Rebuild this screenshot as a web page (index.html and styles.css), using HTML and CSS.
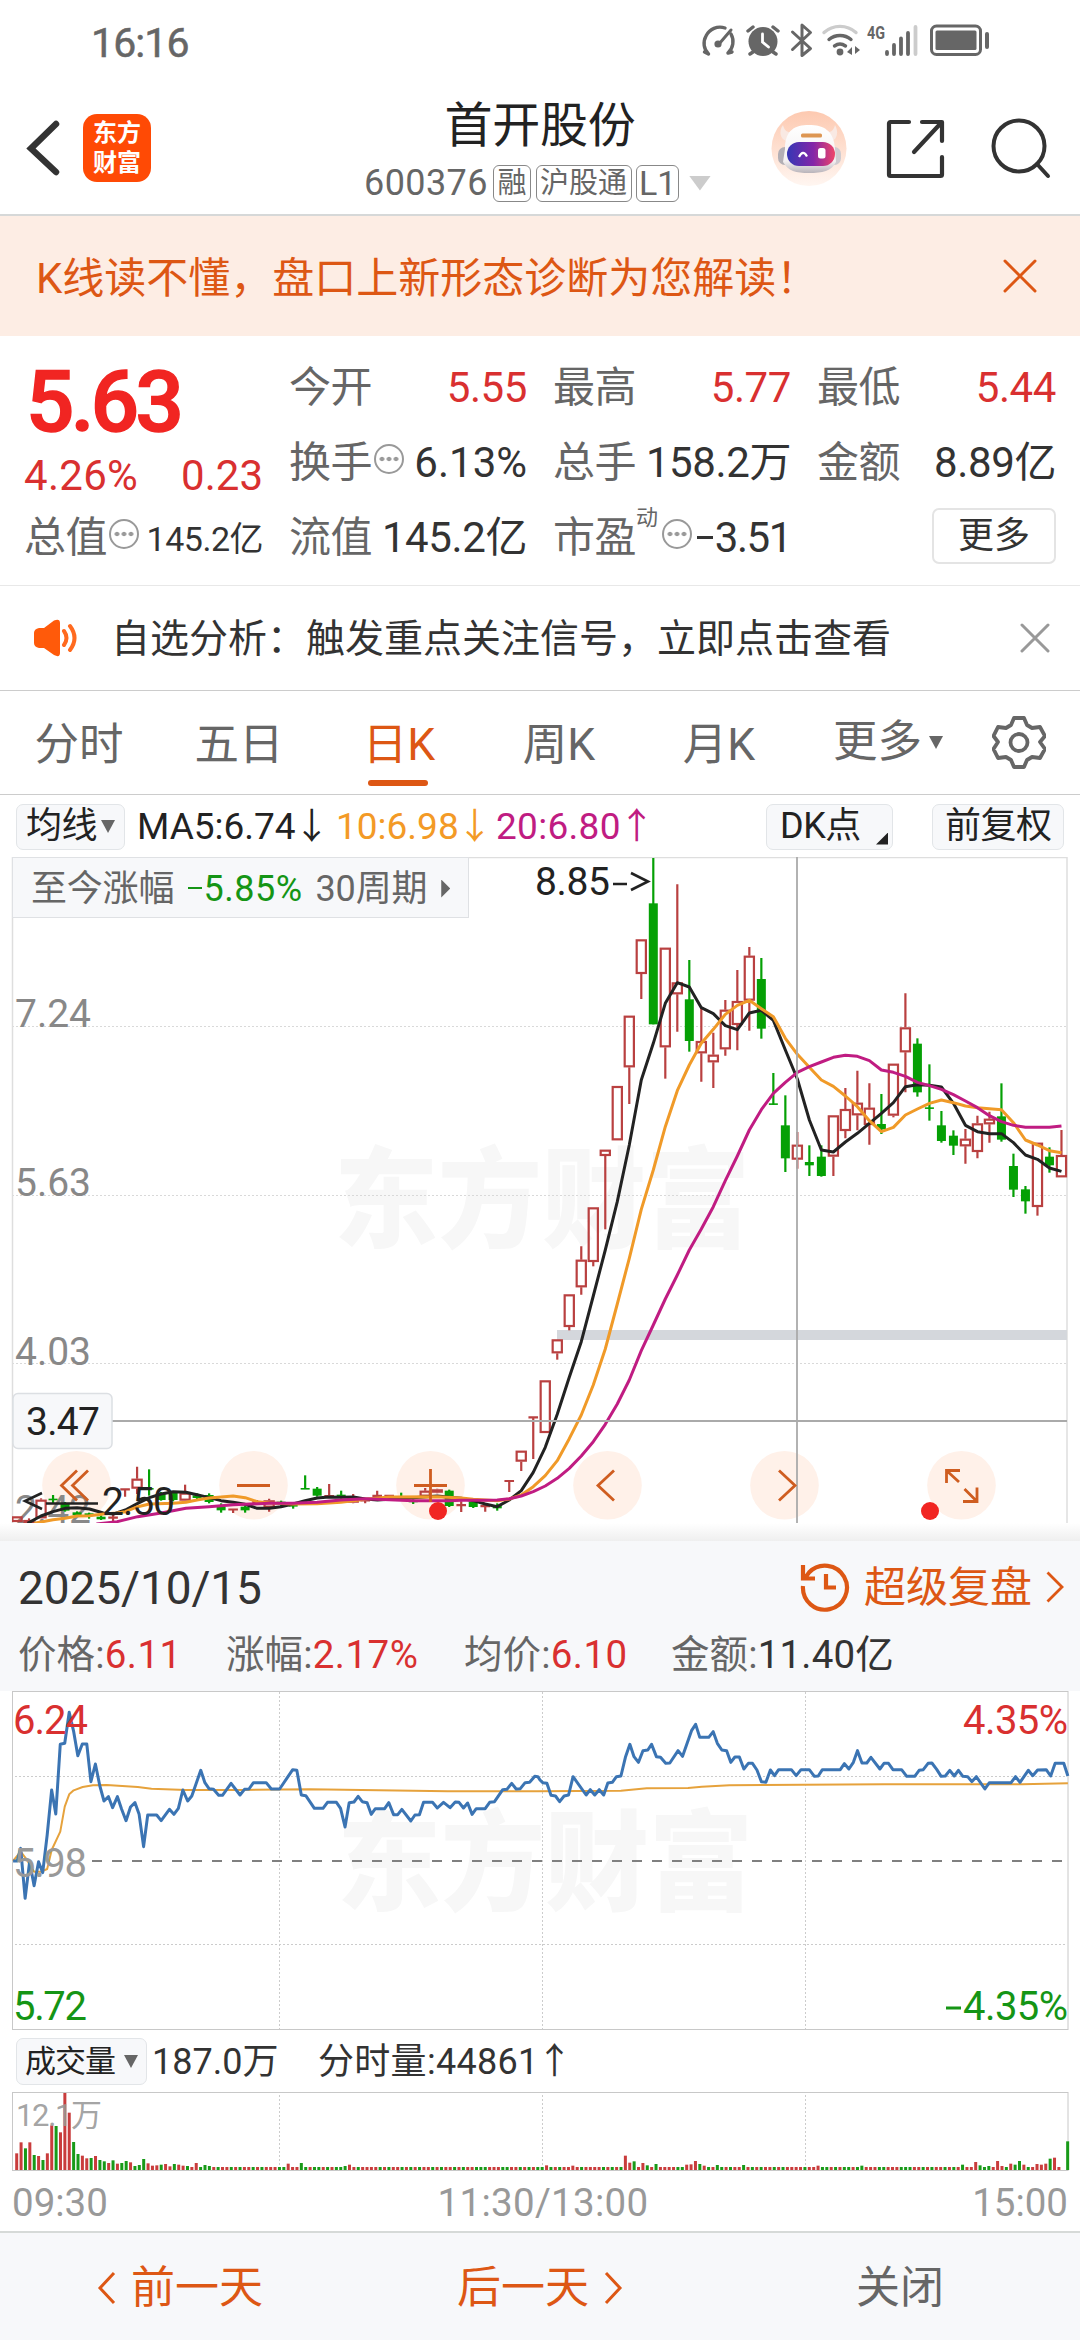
FILE: index.html
```html
<!DOCTYPE html>
<html lang="zh-CN">
<head>
<meta charset="utf-8">
<title>首开股份 600376</title>
<link rel="stylesheet" href="styles.css">
</head>
<body>
<div class="status">
  <span class="clock">16:16</span>
  <svg class="status-icons" viewBox="700 20 292 42" width="292" height="42" fill="none" stroke="#666" stroke-width="3.4" stroke-linecap="round">
    <path d="M708.500 54A15 15 0 0 1 706 36A15.500 15.500 0 0 1 725 28M731 34A15.500 15.500 0 0 1 728 53M708.500 54l-4 -2M728 53l4-1"/><path d="M731 30L719 44" stroke-width="3"/><circle cx="718" cy="44" r="3.600" fill="#666" stroke="none"/>
    <circle cx="763" cy="41.500" r="14.500" fill="#666" stroke="none"/><path d="M748 31l5-4M773 27l5 4M753 52l-3 2M773 52l3 2"/><path d="M762.500 34v8l6 5" stroke="#fff" stroke-width="2.800"/>
    <path d="M792.500 32l18 16.500-8.500 7V25l8.500 7.500-18 17" stroke-width="3" stroke-linejoin="round"/>
    <path d="M824 32.500a24 24 0 0 1 32 0" stroke="#ccc"/><path d="M829 39.500a17 17 0 0 1 22 0M834.500 46a9.500 9.500 0 0 1 11 0"/><circle cx="840" cy="52" r="3.400" fill="#666" stroke="none"/><path d="M847 52l5-5v8M855 46v8l5-4z" stroke="none" fill="#666"/>
    <text x="867" y="38.500" class="net" textLength="18" lengthAdjust="spacingAndGlyphs">4G</text>
    <path d="M887 52v2M894 45v9M901 38.500v15.500M908 33v21" stroke-width="3.800"/><path d="M915.500 27v27" stroke="#ccc" stroke-width="3.800"/>
    <rect x="931.500" y="26" width="49" height="28.500" rx="5" stroke-width="3"/><rect x="935.500" y="30.500" width="41" height="19.500" rx="1.500" fill="#666" stroke="none"/><path d="M987 34v13" stroke-width="4"/>
  </svg>
</div>

<header class="header">
  <div class="nav-left">
    <svg width="34" height="58" viewBox="0 0 34 58" fill="none" stroke="#333" stroke-width="6.500" stroke-linecap="round"><path d="M30 5L5 29.500L30 53"/></svg>
    <div class="logo"><span>东方</span><span>财富</span></div>
  </div>
  <div class="title-box">
    <h1>首开股份</h1>
    <div class="code-row"><span class="code">600376</span><span class="tag">融</span><span class="tag">沪股通</span><span class="tag">L1</span><i class="tri-down light"></i></div>
  </div>
  <div class="nav-right">
    <svg class="robot" width="76" height="76" viewBox="0 0 76 76">
      <defs>
        <linearGradient id="peach" x2="0" y2="1"><stop stop-color="#fdc9b0"/><stop offset="1" stop-color="#fff6f1"/></linearGradient>
        <linearGradient id="visor"><stop stop-color="#3537b5"/><stop offset=".55" stop-color="#8426a8"/><stop offset="1" stop-color="#ef4569"/></linearGradient>
        <linearGradient id="shell" x2="0" y2="1"><stop stop-color="#fff"/><stop offset=".75" stop-color="#f4f1f2"/><stop offset="1" stop-color="#b9b4ba"/></linearGradient>
      </defs>
      <circle cx="38" cy="37.500" r="37.500" fill="url(#peach)"/>
      <rect x="7" y="36" width="14" height="18" rx="7" fill="#b3afb5"/><rect x="57" y="36" width="13" height="18" rx="6.500" fill="#cfcbd0"/>
      <path d="M12 14c-5 7-2 14 3 16l8-8c-7 0-10-3-11-8zM64 14c4 7 2 14-3 16l-8-8c7 0 10-3 11-8z" fill="#f9e9e3"/>
      <path d="M14 38C14 19 24 14 38 14s25 5 26 24l1 13c-4 9-14 11-27 11s-21-2-26-11z" fill="url(#shell)"/>
      <rect x="16" y="31" width="48" height="24" rx="12" fill="url(#visor)"/><rect x="30" y="22.500" width="21" height="4" rx="1.500" fill="#dd9653"/>
      <path d="M28 46q4-8 8-.5" fill="none" stroke="#fff" stroke-width="2.200"/><rect x="47" y="37" width="7.500" height="10.500" rx="2.500" fill="#fff"/>
    </svg>
    <svg width="60" height="60" viewBox="0 0 60 60" fill="none" stroke="#333" stroke-width="4.200" stroke-linecap="round" stroke-linejoin="round"><path d="M23 3H4.500Q3 3 3 4.500V55.500Q3 57 4.500 57H54.500Q56 57 56 55.500V38M36 3H56V22M55 4L28 33"/></svg>
    <svg width="62" height="62" viewBox="0 0 62 62" fill="none" stroke="#333" stroke-width="4" stroke-linecap="round"><circle cx="29" cy="28" r="25.500"/><path d="M47 46L58 58"/></svg>
  </div>
</header>

<div class="banner"><span>K线读不懂，盘口上新形态诊断为您解读！</span>
  <svg width="34" height="34" viewBox="0 0 34 34" stroke="#dd5714" stroke-width="3" stroke-linecap="round"><path d="M2 2L32 32M32 2L2 32"/></svg></div>

<section class="quote">
  <div class="price-col">
    <div class="price">5.63</div>
    <div class="chg"><span>4.26%</span><span>0.23</span></div>
    <div class="cell"><span class="lab">总值<i class="more-dot"></i></span><span class="val small">145.2亿</span></div>
  </div>
  <div class="grid">
    <div class="cell"><span class="lab">今开</span><span class="val red">5.55</span></div>
    <div class="cell"><span class="lab">最高</span><span class="val red">5.77</span></div>
    <div class="cell"><span class="lab">最低</span><span class="val red">5.44</span></div>
    <div class="cell"><span class="lab">换手<i class="more-dot"></i></span><span class="val wide">6.13%</span></div>
    <div class="cell"><span class="lab">总手</span><span class="val">158.2万</span></div>
    <div class="cell"><span class="lab">金额</span><span class="val">8.89亿</span></div>
    <div class="cell"><span class="lab">流值</span><span class="val">145.2亿</span></div>
    <div class="cell"><span class="lab">市盈<sup>动</sup><i class="more-dot"></i></span><span class="val pe"><b class="minus"></b>3.51</span></div>
    <div class="cell end"><button class="more-btn">更多</button></div>
  </div>
</section>

<div class="notice">
  <svg width="46" height="38" viewBox="0 0 46 38"><path d="M6 9H11L21 1.500Q27-1 27 4V34Q27 39 21 36L11 29H6Q1 28 1 24V14Q1 10 6 9Z" fill="#ff5a0a"/><path d="M31 12q5 7 0 14M37 7q9 12 0 24" fill="none" stroke="#ff6a1f" stroke-width="4" stroke-linecap="round"/></svg>
  <span>自选分析：触发重点关注信号，立即点击查看</span>
  <svg width="30" height="30" viewBox="0 0 30 30" stroke="#999" stroke-width="3" stroke-linecap="round"><path d="M2 2L28 28M28 2L2 28"/></svg>
</div>

<nav class="tabs">
  <span>分时</span><span>五日</span><span class="on">日K</span><span>周K</span><span>月K</span><span class="tab-more">更多<i class="tri-down"></i></span>
  <svg class="gear" width="54" height="54" viewBox="0 0 54 54" fill="none" stroke="#666" stroke-width="3.800" stroke-linejoin="round"><path d="M22 3H32L35 10L40 13L48 12L53 21L48 27L53 34L48 43L40 42L35 45L32 52H22L19 45L14 42L6 43L1.500 34L6 27L1.500 21L6 12L14 13L19 10Z"/><circle cx="27" cy="27.500" r="8.500"/></svg>
</nav>

<div class="ma-row">
  <span class="chip">均线<i class="tri-down"></i></span>
  <span class="ma ma5">MA5:6.74<b>↓</b></span><span class="ma ma10">10:6.98<b>↓</b></span><span class="ma ma20">20:6.80<b>↑</b></span>
  <span class="chip dk">DK点<i class="corner"></i></span><span class="chip fq">前复权</span>
</div>

<section class="kchart">
  <svg viewBox="0 857 1080 684" width="1080" height="684">
    <defs>
      <linearGradient id="shade" x2="0" y2="1"><stop stop-color="#fff"/><stop offset="1" stop-color="#efefef"/></linearGradient>
      <clipPath id="kclip"><rect x="12" y="857" width="1058" height="666"/></clipPath>
    </defs>
    <text class="wm" x="334" y="1239" textLength="416" lengthAdjust="spacingAndGlyphs">东方财富</text>
    <g class="gridline"><path d="M12 1026.500H1067M12 1195.500H1067M12 1363.500H1067"/></g>
    <path class="frame" d="M12.500 1523V857.500H1067V1523"/>
    <rect x="557" y="1330" width="510" height="10" fill="#d4d7dc"/>
    <g class="circles" id="circles"></g>
    <g class="axis"><text x="15" y="1027" textLength="76">7.24</text><text x="15" y="1196" textLength="76">5.63</text><text x="15" y="1365" textLength="76">4.03</text><text x="15" y="1523" textLength="76">2.42</text></g>
    <g id="candles" clip-path="url(#kclip)"></g>
    <g clip-path="url(#kclip)" class="lines"><polyline id="ma5"/><polyline id="ma10"/><polyline id="ma20"/></g>
    <g class="cross"><path d="M797 857V1523M112 1421H1067"/></g>
    <g class="icons">
      <path d="M77 1470.500L61.500 1485.500L77 1500.500M88 1470.500L72.500 1485.500L88 1500.500M237 1485.500H270M414 1485.500H447M430.500 1469V1502M614 1470.500L598 1485.500L614 1500.500M779 1470.500L795 1485.500L779 1500.500"/>
      <path d="M946.500 1483V1470.500H960M947 1471L959 1482M963 1501.500H977V1487.500M976.500 1501L964.500 1489" stroke-width="3.600"/>
    </g>
    <circle cx="438" cy="1511" r="9" fill="#f12522"/><circle cx="930" cy="1511" r="9" fill="#f12522"/>
    <g class="mark"><text x="535" y="895" textLength="75">8.85</text><path d="M613 884H627M631 873L648 881.500L631 890"/><text x="102" y="1515" textLength="73">2.50</text><path d="M42 1493L25 1501L42 1509M46 1503.500H98"/></g>
    <rect x="13" y="1393.500" width="99" height="55" rx="5" fill="#f7f8fa" stroke="#dcdfe3" stroke-width="1.500"/>
    <text class="cur" x="26" y="1435" textLength="74">3.47</text>
    <rect x="0" y="1523" width="1080" height="18" fill="url(#shade)"/>
  </svg>
  <div class="range"><span>至今涨幅</span><span class="green"><b class="minus"></b>5.85%</span><span>30周期</span><i class="tri-right"></i></div>
</section>

<section class="panel">
  <div class="panel-top"><span class="date">2025/10/15</span>
    <span class="replay">
      <svg width="50" height="50" viewBox="0 0 50 50" fill="none" stroke="#dd5714" stroke-width="4.200"><path d="M3 24A22 22 0 1 0 9 10.500L5 16M3 3V16.500H15M26 12V25.500H36"/></svg>
      <span>超级复盘</span>
      <svg width="18" height="32" viewBox="0 0 18 32" fill="none" stroke="#dd5714" stroke-width="2.800"><path d="M1.500 1.500L16 16L1.500 30.500"/></svg>
    </span>
  </div>
  <div class="panel-stats"><span>价格:<b>6.11</b></span><span>涨幅:<b>2.17%</b></span><span>均价:<b>6.10</b></span><span>金额:<em>11.40亿</em></span></div>
</section>

<svg class="minute" viewBox="0 1691 1080 340" width="1080" height="340">
  <text class="wm" x="337" y="1902" textLength="416" lengthAdjust="spacingAndGlyphs">东方财富</text>
  <g class="gridline strong"><path d="M15 1776.500H1067M15 1944.500H1067M279.500 1692V2029M542.500 1692V2029M805.500 1692V2029"/></g>
  <path d="M92 1861H1067" stroke="#808080" stroke-width="2" stroke-dasharray="10 10"/>
  <rect x="12.500" y="1691.500" width="1055.500" height="338" class="frame2"/>
  <polyline id="avg"/><polyline id="px"/>
  <g class="mtext"><text x="13" y="1734" textLength="75" fill="#d93030">6.24</text><text x="13" y="1877" textLength="74" fill="#999">5.98</text><text x="13" y="2020" textLength="74" fill="#159515">5.72</text><text x="963" y="1734" textLength="105" fill="#d93030">4.35%</text><text x="963" y="2020" textLength="105" fill="#159515">4.35%</text><path d="M946 2008H961" stroke="#159515" stroke-width="3"/></g>
</svg>

<div class="vol-row"><span class="chip vol">成交量<i class="tri-down"></i></span><span class="v1">187.0万</span><span class="v2">分时量:44861<b>↑</b></span></div>
<svg class="volume" viewBox="0 2092 1080 80" width="1080" height="80">
  <g class="gridline strong"><path d="M279.500 2095V2170M542.500 2095V2170M805.500 2095V2170"/></g>
  <rect x="12.500" y="2092.500" width="1055.500" height="78" class="frame2"/>
  <g id="vol"></g>
  <text x="16" y="2125.500" textLength="86" class="vmax">12.1万</text>
</svg>
<div class="time-axis"><span>09:30</span><span>11:30/13:00</span><span>15:00</span></div>
<footer class="footer">
  <span class="act"><svg width="20" height="34" viewBox="0 0 20 34" fill="none" stroke="#dd5714" stroke-width="3"><path d="M17 2L3 17L17 32"/></svg>前一天</span>
  <span class="act">后一天<svg width="20" height="34" viewBox="0 0 20 34" fill="none" stroke="#dd5714" stroke-width="3"><path d="M3 2L17 17L3 32"/></svg></span>
  <span>关闭</span>
</footer>
<script src="script.js"></script>
</body>
</html>
```
FILE: styles.css
```css
* { box-sizing: border-box; }
body { margin: 0; width: 1080px; background: #fff; color: #333; font-family: Roboto, "Noto Sans CJK SC", sans-serif; }
i, em { font-style: normal; }
b { font-weight: 400; }
svg { display: block; flex: none; }

.status { height: 84px; display: flex; justify-content: space-between; align-items: center; padding: 0 88px 2px 91px; }
.clock { font-size: 41px; font-weight: 400; color: #666; line-height: 42px; padding-top: 4px; letter-spacing: -.9px; -webkit-text-stroke: .5px #666; }
.net { font-size: 19px; font-weight: 700; fill: #666; stroke: none; }

.header { height: 132px; border-bottom: 2px solid #d6d8d8; display: grid; grid-template-columns: 340px 1fr 340px; }
.nav-left { display: flex; align-items: center; padding: 0 0 2px 26px; gap: 23px; }
.logo { width: 68px; height: 68px; border-radius: 14px; background: #ff4a05; color: #fff; font-size: 24px; font-weight: 700; line-height: 30px; padding-top: 4px; display: flex; flex-direction: column; align-items: center; }
.title-box { display: flex; flex-direction: column; align-items: center; }
h1 { margin: 13px 0 0; font-size: 48px; line-height: 58px; font-weight: 400; color: #222; letter-spacing: -.3px; }
.code-row { display: flex; align-items: center; height: 36px; margin: 10px 0 0 0; color: #666; width: 352px; }
.code { font-size: 36px; line-height: 36px; width: 129px; letter-spacing: .4px; white-space: nowrap; flex: none; }
.tag { height: 37px; border: 1.5px solid #888; border-radius: 6px; font-size: 29px; line-height: 34px; padding: 0 3.500px; margin-right: 4.500px; white-space: nowrap; }
.tag:last-of-type { font-size: 34px; padding: 0 2px; }
.tri-down { display: inline-block; width: 14px; height: 13px; background: #666; clip-path: polygon(0 0, 100% 0, 50% 100%); }
.tri-down.light { width: 22px; height: 15px; background: #ccc; margin-left: 5px; flex: none; }
.nav-right { display: flex; align-items: center; padding-left: 31px; }
.nav-right svg:nth-child(2) { margin-left: 39px; }
.nav-right svg:nth-child(3) { margin-left: 44px; }

.banner { height: 120px; background: #fdede4; color: #dd5714; display: flex; align-items: center; justify-content: space-between; padding: 0 43px 0 36px; font-size: 42px; line-height: 60px; }
.banner span { padding-top: 6px; letter-spacing: 0; }

.quote { height: 250px; border-bottom: 1px solid #e8e8e8; display: grid; grid-template-columns: 239px 767px; gap: 26px; padding: 14px 24px 0; }
.price-col { display: flex; flex-direction: column; }
.price { height: 102px; line-height: 104px; font-size: 85px; font-weight: 500; color: #f12522; letter-spacing: -3.6px; padding-left: 2px; -webkit-text-stroke: 1.5px #f12522; }
.chg { height: 48px; line-height: 48px; color: #d93030; font-size: 42px; display: flex; justify-content: space-between; }
.chg span:first-child { letter-spacing: .3px; }
.grid { display: grid; grid-template-columns: 238px 238px 239px; grid-auto-rows: 75px; column-gap: 26px; }
.cell { display: flex; align-items: center; justify-content: space-between; height: 75px; font-size: 42px; line-height: 60px; white-space: nowrap; padding-top: 1px; }
.lab { display: flex; align-items: center; color: #666; letter-spacing: -.5px; }
.val { letter-spacing: -.4px; }
.val.wide { letter-spacing: 0; }
.val.pe { letter-spacing: -1.4px; }
.val.small { font-size: 34px; padding-top: 1px; letter-spacing: -.5px; }
.red { color: #d93030; }
.more-dot { width: 30px; height: 30px; margin: -8px 0 0 2px; border: 2.5px solid #999; border-radius: 50%; background: radial-gradient(circle, #999 2px, transparent 2.6px) center / 7px 30px repeat-x; background-clip: content-box; padding: 0 2px; }
sup { font-size: 22px; line-height: 22px; align-self: flex-start; margin-top: -1px; width: 24px; }
.minus { display: inline-block; width: .37em; height: .075em; background: currentColor; vertical-align: .31em; margin: 0 2px 0 1px; }
.cell.end { justify-content: flex-end; }
.more-btn { width: 124px; height: 56px; background: #fff; border: 2px solid #e4e4e4; border-radius: 7px; font: 36px/50px Roboto, "Noto Sans CJK SC", sans-serif; color: #333; padding: 0; margin-top: -5px; }

.notice { height: 105px; border-bottom: 1px solid #ccc; display: flex; align-items: center; padding: 0 30px 0 33px; font-size: 39px; line-height: 60px; }
.notice span { flex: 1; padding: 1px 0 0 32px; letter-spacing: 0; }

.tabs { height: 104px; border-bottom: 1px solid #ccc; display: grid; grid-template-columns: repeat(5, 160px) 180px 1fr; align-items: stretch; font-size: 44.5px; color: #666; text-align: center; line-height: 109px; }
.tabs span { position: relative; height: 103px; left: -1px; }
.on { color: #dd5714; }
.on::after { content: ""; position: absolute; left: 49px; bottom: 8px; width: 60px; height: 6px; border-radius: 3px; background: #dd5714; }
.tab-more { display: flex; align-items: center; padding-left: 34px; gap: 7px; white-space: nowrap; }
.gear { margin: 24px 0 0 12px; }

.ma-row { height: 62px; display: flex; align-items: center; padding: 1px 16px 0; color: #222; }
.chip { height: 46px; display: flex; align-items: center; background: #f7f8fa; border: 1.5px solid #e2e5e8; border-radius: 7px; font-size: 36px; line-height: 43px; white-space: nowrap; flex: none; padding-left: 9px; letter-spacing: -.5px; color: #222; }
.ma-row > .chip:first-child { width: 109px; gap: 4px; }
.ma { font-size: 37px; line-height: 46px; white-space: nowrap; display: flex; }
.ma b, .v2 b { width: 38px; font-size: 36px; margin: 0 -4px 0 -2px; }
.ma5 { margin-left: 12px; width: 199px; } .ma10 { width: 160px; color: #f39a26; } .ma20 { color: #c01c82; letter-spacing: .3px; }
.chip.dk { width: 127px; margin-left: auto; position: relative; padding-left: 13px; }
.corner { position: absolute; right: 4px; bottom: 4px; width: 12px; height: 12px; background: #222; clip-path: polygon(100% 0, 100% 100%, 0 100%); }
.chip.fq { width: 132px; margin-left: 39px; padding-left: 12px; }

.kchart { position: relative; height: 684px; }
.range { position: absolute; left: 12px; top: 0; width: 457px; height: 61px; background: #f7f8fa; border: 1.5px solid #dfe1e4; display: flex; align-items: center; padding: 2px 0 0 18px; font-size: 36px; line-height: 50px; color: #666; white-space: nowrap; letter-spacing: -.2px; }
.green { color: #159515; margin: 0 13px 0 13px; letter-spacing: .5px; }
.tri-right { width: 9px; height: 18px; background: #666; margin-left: 14px; clip-path: polygon(0 0, 100% 50%, 0 100%); }
.wm { font-size: 109px; font-weight: 900; fill: #f7f7f7; }
.gridline path { fill: none; stroke: #d9d9d9; stroke-width: 1; stroke-dasharray: 2 2; }
.gridline.strong path { stroke: #ccc; }
.frame { fill: none; stroke: #dedede; stroke-width: 1.5; }
.frame2 { fill: none; stroke: #c8c8c8; stroke-width: 1; }
.circles circle { fill: #fff1e9; }
.axis text { font-size: 39px; fill: #888; }
.mark text, .cur { font-size: 39px; fill: #222; }
.mark path { fill: none; stroke: #222; stroke-width: 2.6; }
.cross path { fill: none; stroke: #aaa; stroke-width: 1.8; }
.icons path { fill: none; stroke: #cf5d20; stroke-width: 2.8; }
polyline { fill: none; stroke-width: 3; stroke-linejoin: round; }
#ma5 { stroke: #222; } #ma10 { stroke: #f09a28; } #ma20 { stroke: #c01c82; }
#px { stroke: #3b74b3; } #avg { stroke: #e6a23c; stroke-width: 2; }
.up { fill: none; stroke: #b94040; stroke-width: 2.2; }
.upw { stroke: #b94040; stroke-width: 2.2; }
.dn { fill: #05a005; }
.dnw { stroke: #05a005; stroke-width: 2.2; }

.panel { height: 150px; background: #f7f8fa; padding: 12px 16px 0 18px; }
.panel-top { height: 68px; display: flex; align-items: center; justify-content: space-between; }
.date { font-size: 46px; line-height: 60px; letter-spacing: -.1px; padding-top: 1px; }
.replay { display: flex; align-items: center; color: #dd5714; font-size: 42px; line-height: 60px; letter-spacing: 0; }
.replay span { margin: 0 14px 0 14px; padding-top: 2px; }
.panel-stats { display: grid; grid-template-columns: 208px 238px 207px 1fr; font-size: 38.5px; line-height: 67px; color: #666; white-space: nowrap; letter-spacing: .1px; }
.panel-stats b { color: #d93030; letter-spacing: .5px; } .panel-stats em { color: #333; letter-spacing: .2px; }
.mtext text { font-size: 40px; }

.vol-row { height: 61px; display: flex; align-items: center; padding-left: 16px; font-size: 36px; line-height: 50px; color: #333; }
.chip.vol { width: 131px; height: 47px; font-size: 31px; padding-left: 8px; letter-spacing: -1px; gap: 9px; }
.v1 { margin-left: 5px; width: 166px; }
.v2 { display: flex; letter-spacing: .3px; }
.vmax { font-size: 31px; fill: #999; fill-opacity: .9; }
.time-axis { height: 59px; display: grid; grid-template-columns: 1fr 1fr 1fr; padding: 0 12px; font-size: 38.5px; line-height: 62px; color: #999; }
.time-axis span:nth-child(2) { text-align: center; padding-left: 6px; letter-spacing: .3px; }
.time-axis span:nth-child(3) { text-align: right; }
.footer { height: 109px; border-top: 2px solid #d6dad8; background: #f7f8fa; display: grid; grid-template-columns: 1fr 1fr 1fr; font-size: 44px; line-height: 110px; color: #666; text-align: center; }
.act { display: flex; align-items: center; justify-content: center; gap: 14px; color: #dd5714; }
```
FILE: script.js
```js
const NS = 'http://www.w3.org/2000/svg';
const add = (parent, tag, attrs) => {
  const el = document.createElementNS(NS, tag);
  for (const k in attrs) el.setAttribute(k, attrs[k]);
  parent.appendChild(el);
};

// Candles: direction, body top, body bottom, high, low (chart units, thirds of a pixel from y = 850)
const candles = `r 1999 2016 1999 2016|r 2010 2020 2005 2020|r 1949 2005 1945 2005|g 1946 1950 1935 1960|g 1960 1982 1956 1985|g 1987 1995 1984 1999|g 1990 1996 1988 2006|g 2000 2008 1996 2010|r 2000 2006 1992 2013|r 1917 1919 1917 1940|r 1886 1916 1850 1932|g 1914 1917 1858 1937|g 1932 1950 1926 1952|g 1928 1950 1924 1954|r 1928 1952 1904 1952|g 1936 1944 1930 1948|g 1935 1956 1930 1960|g 1970 1981 1960 1988|r 1977 1980 1977 1989|g 1970 1981 1966 1988|r 1954 1958 1950 1964|r 1951 1973 1946 1985|g 1955 1960 1952 1968|g 1965 1968 1958 1976|g 1914 1917 1876 1917|g 1916 1937 1911 1940|r 1936 1940 1902 1944|g 1934 1942 1922 1946|r 1944 1958 1932 1960|r 1950 1953 1946 1960|r 1936 1939 1922 1942|r 1936 1939 1934 1940|g 1938 1942 1928 1946|g 1952 1955 1948 1962|r 1922 1940 1914 1944|r 1918 1928 1916 1930|g 1922 1968 1919 1971|r 1964 1967 1954 1986|g 1955 1971 1950 1974|r 1966 1971 1960 1985|g 1965 1975 1960 1982|r 1892 1894 1892 1926|r 1802 1835 1802 1863|r 1701 1703 1701 1827|r 1591 1749 1591 1749|r 1468 1510 1468 1529|r 1333 1431 1333 1441|r 1229 1312 1189 1334|r 1072 1236 1072 1249|r 899 918 899 1138|r 708 871 708 871|r 497 652 497 762|r 268 372 268 447|g 160 523 24 523|r 293 592 293 686|r 397 433 103 545|g 448 573 330 605|r 573 610 473 695|r 614 637 548 714|r 479 598 450 617|r 453 525 360 601|r 317 452 291 542|g 387 536 324 566|g 760 764 669 764|g 826 925 736 966|r 884 929 846 956|g 936 946 886 978|g 920 978 886 980|r 796 920 796 978|r 777 843 714 865|r 758 796 662 841|r 773 825 700 884|g 822 838 732 852|r 641 797 641 802|r 532 607 430 727|g 581 727 565 740|g 772 774 643 812|g 826 873 783 878|g 857 887 841 915|r 866 889 837 941|r 820 906 797 925|r 806 823 785 878|g 799 869 700 875|g 948 1019 911 1041|g 1018 1054 1008 1091|r 878 1071 878 1097|g 920 946 892 968|r 915 982 840 982`.split('|');
const X = n => 653.3 + n * 12.005;
const Y = v => 850 + v / 3;
const FIRST = -53;
const host = document.getElementById('candles');
candles.forEach((row, i) => {
  const [dir, ...nums] = row.split(' ');
  const [top, bottom, high, low] = nums.map(v => Y(+v));
  const x = X(i + FIRST);
  if (dir === 'g') {
    add(host, 'path', { class: 'dnw', d: `M${x} ${high}V${low}` });
    add(host, 'rect', { class: 'dn', x: x - 4.5, y: top, width: 9, height: Math.max(1.6, bottom - top) });
  } else if (bottom - top < 2.6) {
    add(host, 'path', { class: 'upw', d: `M${x} ${high}V${low}M${x - 4.8} ${(top + bottom) / 2}h9.6` });
  } else {
    add(host, 'path', { class: 'upw', d: `M${x} ${high}V${top}M${x} ${bottom}V${low}` });
    add(host, 'rect', { class: 'up', x: x - 4.6, y: top + 1, width: 9.2, height: Math.max(1, bottom - top - 2) });
  }
});

// Moving averages: sparse early samples as x,y; later ones one value per candle
const early = s => s.split(' ').map(p => { const [x, y] = p.split(','); return `${x / 2.904},${1350 + y / 3}`; }).join(' ');
const perBar = (start, s) => s.split(' ').map((v, i) => `${X(start + i)},${Y(+v)}`).join(' ');
const line = (id, pts) => document.getElementById(id).setAttribute('points', pts);
line('ma5', early('80,520 119,498 154,485 189,475 224,473 260,477 300,489 330,492 364,480 400,460 434,443 468,432 503,425 540,427 572,434 607,443 642,452 677,457 712,463 747,475 782,475 816,470 851,462 886,452 921,444 955,441 990,442 1026,441 1061,447 1096,450 1200,443 1270,438') + ' ' +
  perBar(-17, '1942 1945 1952 1962 1970 1950 1922 1867 1792 1693 1582 1475 1338 1200 1055 885 690 580 460 398 411 473 491 527 539 489 481 511 600 687 810 900 906 876 850 820 790 758 710 704 706 711 760 826 845 851 851 878 915 928 954 964'));
line('ma10', early('100,520 154,509 189,505 224,498 260,497 300,492 340,489 364,485 400,470 434,462 503,460 540,457 572,450 607,444 677,438 712,443 747,455 782,459 851,462 921,461 990,457 1061,448 1130,441 1270,440') + ' ' +
  perBar(-16, '1944 1948 1950 1952 1947 1935 1910 1877 1832 1766 1695 1605 1497 1362 1225 1078 960 830 722 645 580 538 493 466 451 476 500 565 613 652 690 709 738 770 812 845 832 795 777 760 750 758 768 773 776 779 818 870 885 902 908'));
line('ma20', early('280,522 340,515 400,500 468,489 540,475 607,470 677,464 782,460 851,460 921,457 990,450 1061,446 1130,449 1200,452') + ' ' +
  perBar(-17, '1952 1951 1951 1951 1950 1946 1938 1925 1908 1885 1855 1818 1775 1723 1662 1590 1502 1425 1347 1275 1200 1137 1070 992 918 840 779 730 697 667 650 636 622 616 619 632 660 667 679 697 707 718 734 753 773 797 815 826 832 832 832 828'));

for (let i = 0; i < 6; i++) add(document.getElementById('circles'), 'circle', { cx: 76.5 + i * 177, cy: 1485.3, r: 34.3 });

// Intraday price and average
const half = (off, s) => s.split(' ').map(p => { const [x, y] = p.split(','); return `${off + x / 2.904},${1680 + y / 3}`; }).join(' ');
line('px', half(0, '38,543 50,543 60,505 73,655 86,545 99,617 112,545 124,578 137,465 150,330 162,402 175,193 188,190 201,97 214,155 226,227 239,192 252,192 264,305 277,252 290,318 302,363 315,350 327,383 341,350 353,387 366,422 379,381 392,368 404,403 417,500 429,405 455,405 468,422 492,388 505,403 518,385 531,330 545,363 557,348 583,271 595,308 607,326 620,328 635,346 646,346 671,310 697,345 710,328 723,327 736,308 773,308 788,327 812,327 850,269 862,271 875,345 888,347 913,385 938,385 951,367 977,367 989,385 1002,441 1014,368 1028,366 1040,349 1052,365 1066,368 1078,403 1090,386 1117,386 1129,368 1143,404 1155,404 1167,388 1193,423 1205,405 1218,404 1230,367 1256,367 1270,384 1288,367 1307,383 1322,366 1333,367 1346,384 1358,369 1371,403 1383,386 1409,386 1422,367 1436,365 1460,329 1472,328 1486,310 1499,327 1511,326 1525,308 1538,307 1553,289 1562,290') + ' ' +
  half(540, '0,300 8,308 20,310 32,346 45,348 57,365 70,348 83,345 96,290 134,345 146,329 159,345 172,329 185,345 197,309 210,307 222,290 235,288 248,232 261,193 273,230 286,247 299,212 313,210 324,193 338,230 350,232 365,250 377,249 401,212 414,229 440,152 452,133 464,172 490,172 503,155 515,190 528,210 542,212 554,247 566,231 579,231 592,267 605,250 617,250 630,270 643,305 656,307 669,270 681,287 693,269 730,269 744,287 758,269 782,269 797,289 808,288 820,269 872,269 884,251 897,267 910,247 922,212 935,249 949,249 961,232 987,267 999,250 1012,250 1025,269 1050,269 1065,289 1088,289 1101,271 1113,269 1127,250 1138,249 1152,268 1165,289 1177,288 1190,271 1203,288 1215,271 1228,289 1242,290 1254,305 1267,290 1292,327 1305,308 1368,308 1381,290 1394,307 1418,271 1431,287 1445,270 1470,269 1483,288 1496,250 1521,250 1533,288'));
line('avg', half(0, '38,543 60,515 75,535 99,575 120,575 137,567 150,510 175,455 188,380 201,343 214,331 240,321 270,316 310,315 400,321 440,326 540,330 700,330 900,328 1100,331 1300,334 1560,334') + ' ' +
  half(540, '235,332 310,325 430,324 470,320 550,316 1000,313 1400,313 1533,310'));

// Volume bars: slot, direction, height
const spikes = '0r50 1r83 2g65 3r83 4g45 5r42 6g30 7r50 8r134 9g132 10r113 11r231 12r172 13g84 14g48 15r43 16r35 17g36 18r42 19g30 20g26 21r21 22g29 23r19 24g21 25g27 26r23 27g12 28g15 29g33 30r20 31r13 32r14 33g16 34r18 35r11 36g18 37r16 38r13 39g12 41r21 43g15 44g12 62r19 65g21 75g12 76r16 121r14 127r13 139r43 140r22 141g26 143r21 144g14 146g18 153r16 154r17 155r27 156g18 157r13 160g15 166g15 183r13 193g13 216g16 219r24 220g14 222g12 224r27 225r12 227r19 228g16 229g27 230r16 233r18 234r16 235r19 236g34 237r37 238r9 240g86';
const map = {};
spikes.split(' ').forEach(s => { const m = s.match(/(\d+)([rg])(\d+)/); map[m[1]] = [m[2], +m[3]]; });
for (let i = 0; i < 241; i++) {
  if (i === 239) continue;
  const [dir, h] = map[i] || [(i * 7 % 17 < 5 || i * 5 % 23 < 4) ? 'g' : 'r', 9];
  add(document.getElementById('vol'), 'rect', { x: 15.2 + i * 4.379, y: 2170 - h / 3, width: 3, height: h / 3, fill: dir === 'g' ? '#189a18' : '#c93c3c' });
}
```
